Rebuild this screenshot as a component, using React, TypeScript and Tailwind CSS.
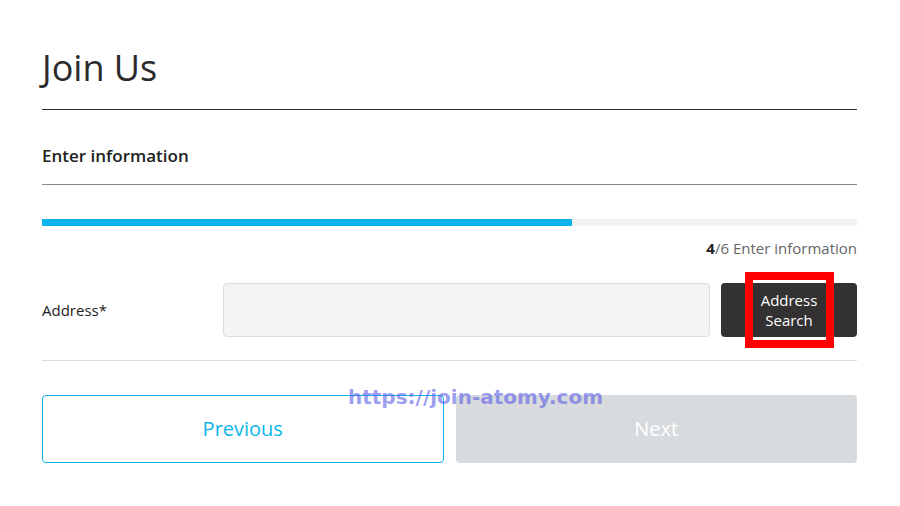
import React from "react";

export default function App() {
  return (
    <div className="relative w-[900px] h-[506px] bg-white pl-[42px] pr-[43px] font-['Open_Sans',sans-serif] text-[#333]">
      <div className="pt-[44px] pb-[17px] border-b border-[#2f3136]">
        <h1 className="text-[36px] leading-[48px] font-normal text-[#2b2b2b]">Join Us</h1>
      </div>
      <div className="mt-[34px] pb-[16px] border-b border-[#8a8a8a]">
        <h2 className="text-[17px] leading-[24px] font-semibold text-[#222]">Enter information</h2>
      </div>
      <div className="mt-[34px] h-[7px] bg-[#f2f3f3]">
        <div className="h-full bg-[#0cb6ec]" style={{ width: "65%" }} />
      </div>
      <div className="mt-[12px] text-right text-[15px] leading-[20px] text-[#666]">
        <span className="font-bold text-[#222]">4</span>/6 Enter information
      </div>
      <div className="mt-[25px] pb-[23px] border-b border-[#dcdcdc] flex items-center">
        <div className="w-[181px] text-[15px] text-[#222]">Address*</div>
        <div className="flex-1 h-[54px] bg-[#f3f4f4] border border-[#dddddd] rounded-[4px]" />
        <div className="relative ml-[11px] w-[136px] h-[54px] bg-[#333132] rounded-[4px] flex items-center justify-center text-white text-[15px] leading-[20px] text-center">
          Address
          <br />
          Search
          <div className="absolute left-[24px] top-[-11px] w-[89px] h-[76px] border-[8px] border-[#ff0000]" />
        </div>
      </div>
      <div className="mt-[34px] grid grid-cols-2 gap-[12px]">
        <div className="h-[68px] border border-[#0cb6ec] rounded-[4px] flex items-center justify-center text-[20px] font-medium text-[#0cb6ec]">
          Previous
        </div>
        <div className="h-[68px] bg-[#d8dbdd] rounded-[4px] flex items-center justify-center text-[20px] font-medium text-white">
          Next
        </div>
      </div>
      <div className="absolute left-[348px] top-[384px] font-['DejaVu_Sans',sans-serif] font-bold text-[20px] leading-[26px] text-[rgba(90,92,230,0.6)]">
        https://join-atomy.com
      </div>
    </div>
  );
}
